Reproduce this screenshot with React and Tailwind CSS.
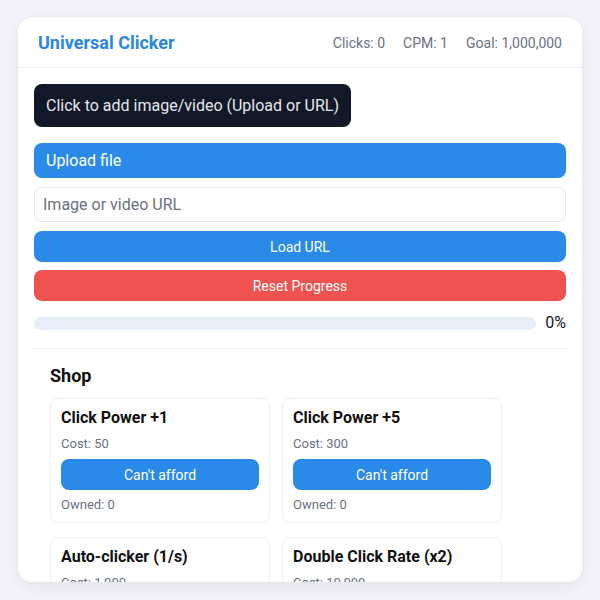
export default function App() {
  const items = [
    { name: "Click Power +1", cost: "50" },
    { name: "Click Power +5", cost: "300" },
    { name: "Auto-clicker (1/s)", cost: "1,000" },
    { name: "Double Click Rate (x2)", cost: "10,000" },
  ];

  return (
    <div className="min-h-[600px] bg-[#f3f4f8] p-[18px] font-['Roboto',sans-serif]">
      <div className="h-[564px] overflow-hidden rounded-[14px] bg-white shadow-[0_4px_14px_rgba(15,23,42,0.08)]">
        <header className="flex h-[50px] items-center justify-between border-b border-[#eef0f3] px-5">
          <h1 className="text-[18px] font-bold text-[#2b87dd]">Universal Clicker</h1>
          <div className="flex gap-[18px] text-sm text-[#6b7280]">
            <span>Clicks: 0</span>
            <span>CPM: 1</span>
            <span>Goal: 1,000,000</span>
          </div>
        </header>

        <div className="px-4 pt-4">
          <div className="flex h-[43px] w-fit items-center rounded-lg bg-[#111827] px-3 text-base text-[#e5e7eb]">
            Click to add image/video (Upload or URL)
          </div>

          <button className="mt-4 flex h-[35px] w-full items-center rounded-lg bg-[#2a8ae8] px-3 text-base text-white">
            Upload file
          </button>
          <input
            className="mt-[9px] h-[35px] w-full rounded-lg border border-[#e3e7ee] px-2 text-base text-gray-700 placeholder:text-[#6b7280] outline-none"
            placeholder="Image or video URL"
          />
          <button className="mt-[9px] h-[31px] w-full rounded-lg bg-[#2a8ae8] text-sm text-white">
            Load URL
          </button>
          <button className="mt-2 h-[31px] w-full rounded-lg bg-[#ef5350] text-sm text-white">
            Reset Progress
          </button>

          <div className="mt-[10px] flex items-center gap-[9px]">
            <div className="h-[13px] flex-1 rounded-full bg-[#e6eefa]" />
            <span className="text-base text-[#111827]">0%</span>
          </div>

          <div className="mt-[13px] border-t border-[#eef0f3]" />

          <section className="px-4 pt-[17px]">
            <h2 className="text-[18px] font-bold leading-5 text-[#111]">Shop</h2>
            <div className="mt-3 grid grid-cols-[220px_220px] gap-x-3 gap-y-[14px]">
              {items.map((it) => (
                <div
                  key={it.name}
                  className="rounded-lg border border-[#eef0f3] px-[10px] pb-[8px] pt-[9px]"
                >
                  <div className="text-base font-bold leading-5 text-[#111]">{it.name}</div>
                  <div className="mt-[7px] text-[13px] leading-[18px] text-[#6b7280]">
                    Cost: {it.cost}
                  </div>
                  <button className="mt-[6px] h-[31px] w-full rounded-lg bg-[#2a8ae8] text-sm text-white">
                    Can't afford
                  </button>
                  <div className="mt-[6px] text-[13px] leading-[18px] text-[#6b7280]">Owned: 0</div>
                </div>
              ))}
            </div>
          </section>
        </div>
      </div>
    </div>
  );
}
